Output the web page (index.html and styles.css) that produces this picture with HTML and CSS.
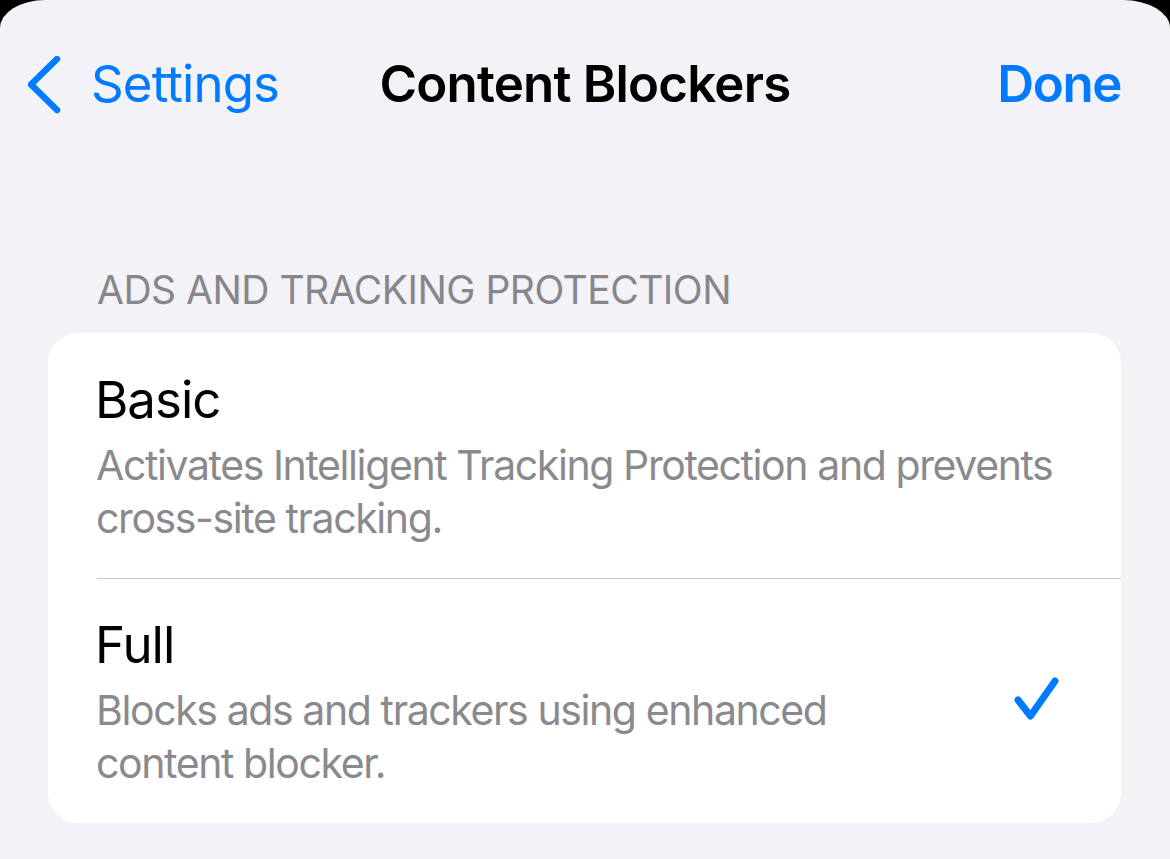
FILE: index.html
```html
<!DOCTYPE html>
<html>
<head>
<meta charset="utf-8">
<link rel="stylesheet" href="styles.css">
</head>
<body>
<div class="sheet">
  <header class="nav">
    <a class="back">
      <svg class="chev" width="40" height="60" viewBox="0 0 40 60"><path d="M29 3 L3 28.5 L29 54" fill="none" stroke="#007aff" stroke-width="6.5" stroke-linecap="round" stroke-linejoin="round"/></svg>
      <span>Settings</span>
    </a>
    <div class="title">Content Blockers</div>
    <a class="done">Done</a>
  </header>
  <div class="section-header">ADS AND TRACKING PROTECTION</div>
  <div class="card">
    <div class="row row-plain">
      <div class="row-text">
        <div class="row-title">Basic</div>
        <div class="row-desc">Activates Intelligent Tracking Protection and prevents cross-site tracking.</div>
      </div>
    </div>
    <div class="row row-sep selected">
      <div class="row-text">
        <div class="row-title">Full</div>
        <div class="row-desc narrow">Blocks ads and trackers using enhanced content blocker.</div>
      </div>
      <svg class="check" width="52" height="52" viewBox="0 0 52 52"><path d="M7 24 L19.5 40 L44 5" fill="none" stroke="#007aff" stroke-width="7" stroke-linecap="round" stroke-linejoin="round"/></svg>
    </div>
  </div>
</div>
</body>
</html>
```
FILE: styles.css
```css
html, body {
  margin: 0;
  padding: 0;
  background: #000;
  height: 100%;
}
body {
  font-family: Inter, "Noto Sans", sans-serif;
  -webkit-font-smoothing: antialiased;
}
.sheet {
  background: #f2f2f7;
  min-height: 100%;
  border-top-left-radius: 45px 28px;
  border-top-right-radius: 47px 28px;
  overflow: hidden;
}
.nav {
  display: grid;
  grid-template-columns: 1fr auto 1fr;
  align-items: center;
  padding: 52px 28px 0 28px;
  height: 62px;
}
.back {
  display: flex;
  align-items: center;
  gap: 23px;
  color: #007aff;
  font-size: 51px;
  line-height: 62px;
  letter-spacing: -0.9px;
}
.chev {
  display: block;
  margin-top: 4px;
}
.title {
  font-size: 51px;
  line-height: 62px;
  font-weight: 600;
  color: #000;
  letter-spacing: -0.8px;
}
.done {
  justify-self: end;
  padding-right: 21px;
  font-size: 51px;
  line-height: 62px;
  font-weight: 600;
  color: #007aff;
  letter-spacing: -1.4px;
}
.section-header {
  margin: 152px 0 20px 97px;
  font-size: 39px;
  line-height: 47px;
  color: #86868b;
  letter-spacing: -0.5px;
}
.card {
  margin: 0 49px 0 48px;
  background: #fff;
  border-radius: 30px;
}
.row {
  display: flex;
  align-items: center;
  margin-left: 49px;
  padding: 36px 58px 33px 0;
}
.row-plain {
  padding-right: 36px;
}
.row-sep {
  border-top: 1px solid #c6c6c8;
  padding-top: 35px;
}
.row-text {
  flex: 1;
}
.row-title {
  font-size: 51px;
  line-height: 62px;
  color: #000;
  letter-spacing: -1px;
  margin-left: -2px;
}
.row-desc {
  margin-top: 8px;
  font-size: 41px;
  line-height: 53px;
  color: #8a8a8e;
  letter-spacing: -1.4px;
  margin-left: -1px;
}
.narrow {
  max-width: 780px;
}
.check {
  display: block;
  flex: none;
}
```
